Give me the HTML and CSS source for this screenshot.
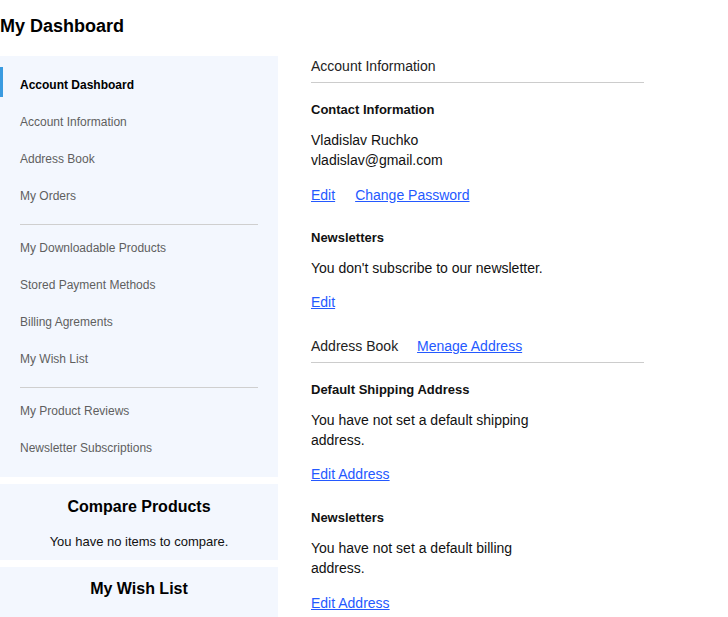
FILE: index.html
```html
<!DOCTYPE html>
<html lang="en">
<head>
<meta charset="utf-8">
<title>My Dashboard</title>
<link rel="stylesheet" href="styles.css">
</head>
<body>
<h1 class="page-title">My Dashboard</h1>
<div class="layout">
  <aside class="sidebar">
    <nav class="nav-block">
      <ul class="nav-list">
        <li class="nav-item active">Account Dashboard</li>
        <li class="nav-item">Account Information</li>
        <li class="nav-item">Address Book</li>
        <li class="nav-item">My Orders</li>
        <li class="nav-divider"></li>
        <li class="nav-item">My Downloadable Products</li>
        <li class="nav-item">Stored Payment Methods</li>
        <li class="nav-item">Billing Agrements</li>
        <li class="nav-item">My Wish List</li>
        <li class="nav-divider"></li>
        <li class="nav-item">My Product Reviews</li>
        <li class="nav-item">Newsletter Subscriptions</li>
      </ul>
    </nav>
    <section class="side-card">
      <h2 class="side-card-title">Compare Products</h2>
      <p class="side-card-text">You have no items to compare.</p>
    </section>
    <section class="side-card side-card-tall">
      <h2 class="side-card-title">My Wish List</h2>
    </section>
  </aside>
  <main class="content">
    <div class="section-title first">Account Information</div>
    <h3 class="block-title">Contact Information</h3>
    <p class="block-text">Vladislav Ruchko<br>vladislav@gmail.com</p>
    <div class="links links-first"><a href="#">Edit</a><a href="#">Change Password</a></div>
    <h3 class="block-title spaced">Newsletters</h3>
    <p class="block-text">You don't subscribe to our newsletter.</p>
    <div class="links"><a href="#">Edit</a></div>
    <div class="section-title">Address Book <a href="#">Menage Address</a></div>
    <h3 class="block-title">Default Shipping Address</h3>
    <p class="block-text">You have not set a default shipping address.</p>
    <div class="links"><a href="#">Edit Address</a></div>
    <h3 class="block-title spaced-sm">Newsletters</h3>
    <p class="block-text">You have not set a default billing address.</p>
    <div class="links links-last"><a href="#">Edit Address</a></div>
  </main>
</div>
</body>
</html>
```

FILE: styles.css
```css
* { box-sizing: border-box; }
html, body { margin: 0; padding: 0; }
body {
  font-family: "Liberation Sans", Arial, sans-serif;
  color: #111;
  background: #fff;
  overflow: hidden;
}
.page-title {
  margin: 15px 0 19px;
  font-size: 18px;
  line-height: 22px;
  font-weight: bold;
  color: #000;
}
.layout {
  display: flex;
  align-items: flex-start;
  gap: 33px;
}
.sidebar {
  width: 278px;
  flex: none;
  display: flex;
  flex-direction: column;
  gap: 7px;
}
.nav-block {
  background: #f3f7fe;
  padding: 11px 0 10px;
}
.nav-list {
  list-style: none;
  margin: 0;
  padding: 0;
}
.nav-item {
  height: 30px;
  padding: 10px 0 4px 17px;
  margin-bottom: 7px;
  font-size: 12px;
  line-height: 16px;
  color: #5f5f5f;
  border-left: 3px solid transparent;
}
.nav-item.active {
  border-left-color: #3a9be0;
  color: #000;
  font-weight: bold;
}
.nav-divider {
  height: 1px;
  background: #cfcfcf;
  margin: 16px 20px 5px;
}
.side-card {
  background: #f3f7fe;
  padding: 13px 0 10px;
  text-align: center;
}
.side-card-title {
  margin: 0;
  font-size: 16px;
  line-height: 20px;
  font-weight: bold;
  color: #000;
}
.side-card-text {
  margin: 17px 0 0;
  font-size: 13px;
  line-height: 16px;
  color: #111;
}
.side-card-tall {
  padding: 12px 0 40px;
}
.content {
  width: 333px;
  flex: none;
}
.section-title {
  padding: 2px 0 8px;
  font-size: 14px;
  line-height: 16px;
  color: #222;
  border-bottom: 1px solid #cccccc;
  margin-top: 24px;
}
.section-title.first { margin-top: 0; }
.section-title a {
  margin-left: 15px;
}
a {
  color: #2459ff;
  text-decoration: underline;
}
.block-title {
  margin: 19px 0 0;
  font-size: 13px;
  line-height: 16px;
  font-weight: bold;
  color: #111;
}
.block-title.spaced { margin-top: 25px; }
.block-title.spaced-sm { margin-top: 26px; }
.block-text {
  margin: 12px 0 0;
  max-width: 240px;
  font-size: 14px;
  line-height: 20px;
  color: #111;
}
.links {
  margin-top: 14px;
  font-size: 14px;
  line-height: 20px;
  display: flex;
  gap: 20px;
}
.links-first { margin-top: 15px; }
.links-last { margin-top: 15px; }
```
